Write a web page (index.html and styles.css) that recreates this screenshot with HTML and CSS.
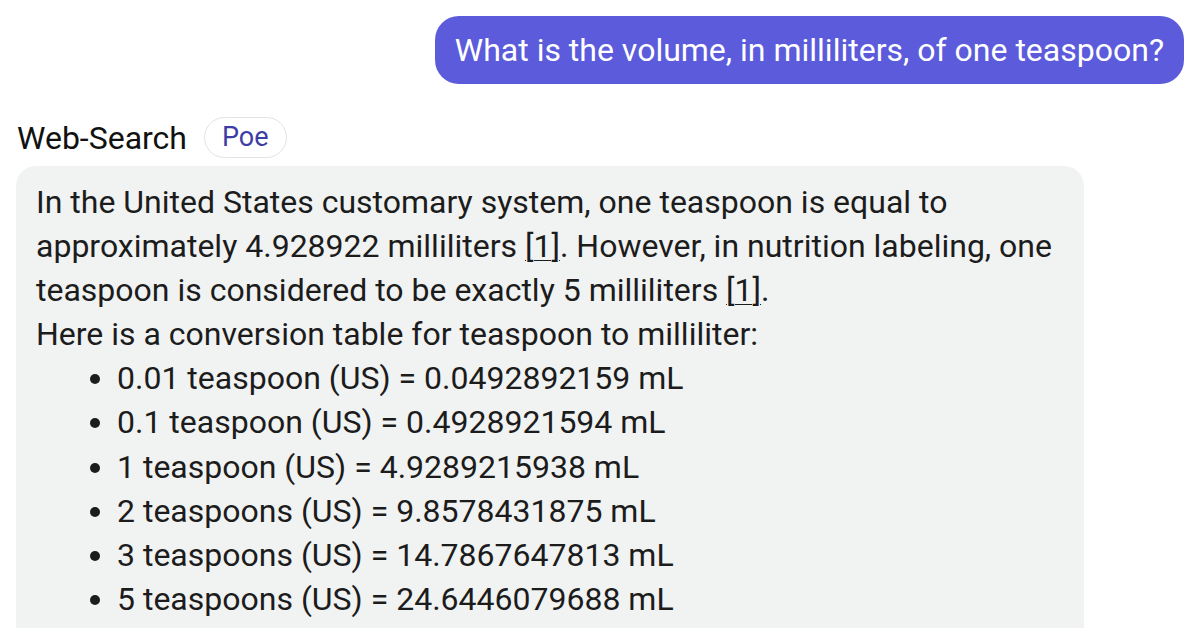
FILE: index.html
```html
<!DOCTYPE html>
<html>
<head>
<meta charset="utf-8">
<link rel="stylesheet" href="styles.css">
</head>
<body>
<div class="chat">
  <div class="user-row">
    <div class="user-bubble">What is the volume, in milliliters, of one teaspoon?</div>
  </div>
  <div class="bot-header">
    <span class="bot-name">Web-Search</span>
    <span class="bot-tag">Poe</span>
  </div>
  <div class="bot-bubble">
    <p>In the United States customary system, one teaspoon is equal to approximately 4.928922 milliliters <a class="ref">[1]</a>. However, in nutrition labeling, one teaspoon is considered to be exactly 5 milliliters <a class="ref">[1]</a>.</p>
    <p>Here is a conversion table for teaspoon to milliliter:</p>
    <ul>
      <li>0.01 teaspoon (US) = 0.0492892159 mL</li>
      <li>0.1 teaspoon (US) = 0.4928921594 mL</li>
      <li>1 teaspoon (US) = 4.9289215938 mL</li>
      <li>2 teaspoons (US) = 9.8578431875 mL</li>
      <li>3 teaspoons (US) = 14.7867647813 mL</li>
      <li>5 teaspoons (US) = 24.6446079688 mL</li>
      <li>10 teaspoons (US) = 49.2892159375 mL</li>
    </ul>
  </div>
</div>
</body>
</html>
```
FILE: styles.css
```css
html, body {
  margin: 0;
  padding: 0;
  background: #ffffff;
  overflow: hidden;
}
body {
  font-family: Roboto, "Noto Sans", sans-serif;
  color: #1a1a1a;
}
.chat {
  padding: 16px 16px 0 16px;
  height: 628px;
  box-sizing: border-box;
  overflow: hidden;
  display: flex;
  flex-direction: column;
}
.user-row {
  display: flex;
  justify-content: flex-end;
  flex-shrink: 0;
}
.user-bubble {
  background: #5b5bdb;
  color: #ffffff;
  font-size: 32px;
  line-height: 68px;
  height: 68px;
  padding: 0 20px;
  border-radius: 24px;
}
.bot-header {
  display: flex;
  align-items: center;
  gap: 17px;
  margin-top: 33px;
  padding-left: 1px;
  flex-shrink: 0;
}
.bot-name {
  font-size: 32px;
  color: #111111;
}
.bot-tag {
  font-size: 27px;
  color: #3d3da6;
  border: 1.5px solid #e2e3e5;
  border-radius: 22px;
  height: 39px;
  line-height: 39px;
  padding: 0 17px;
}
.bot-bubble {
  margin-top: 8px;
  flex-shrink: 0;
  width: 1068px;
  box-sizing: border-box;
  background: #f1f2f2;
  border-radius: 20px;
  padding: 14px 20px 20px 20px;
  font-size: 32px;
  line-height: 44.1px;
  color: #1c1c1c;
}
.bot-bubble p {
  margin: 0;
}
.ref {
  text-decoration: underline;
  text-underline-offset: 3px;
  text-decoration-thickness: 1px;
}
.bot-bubble ul {
  margin: 0;
  padding-left: 81px;
}
```
